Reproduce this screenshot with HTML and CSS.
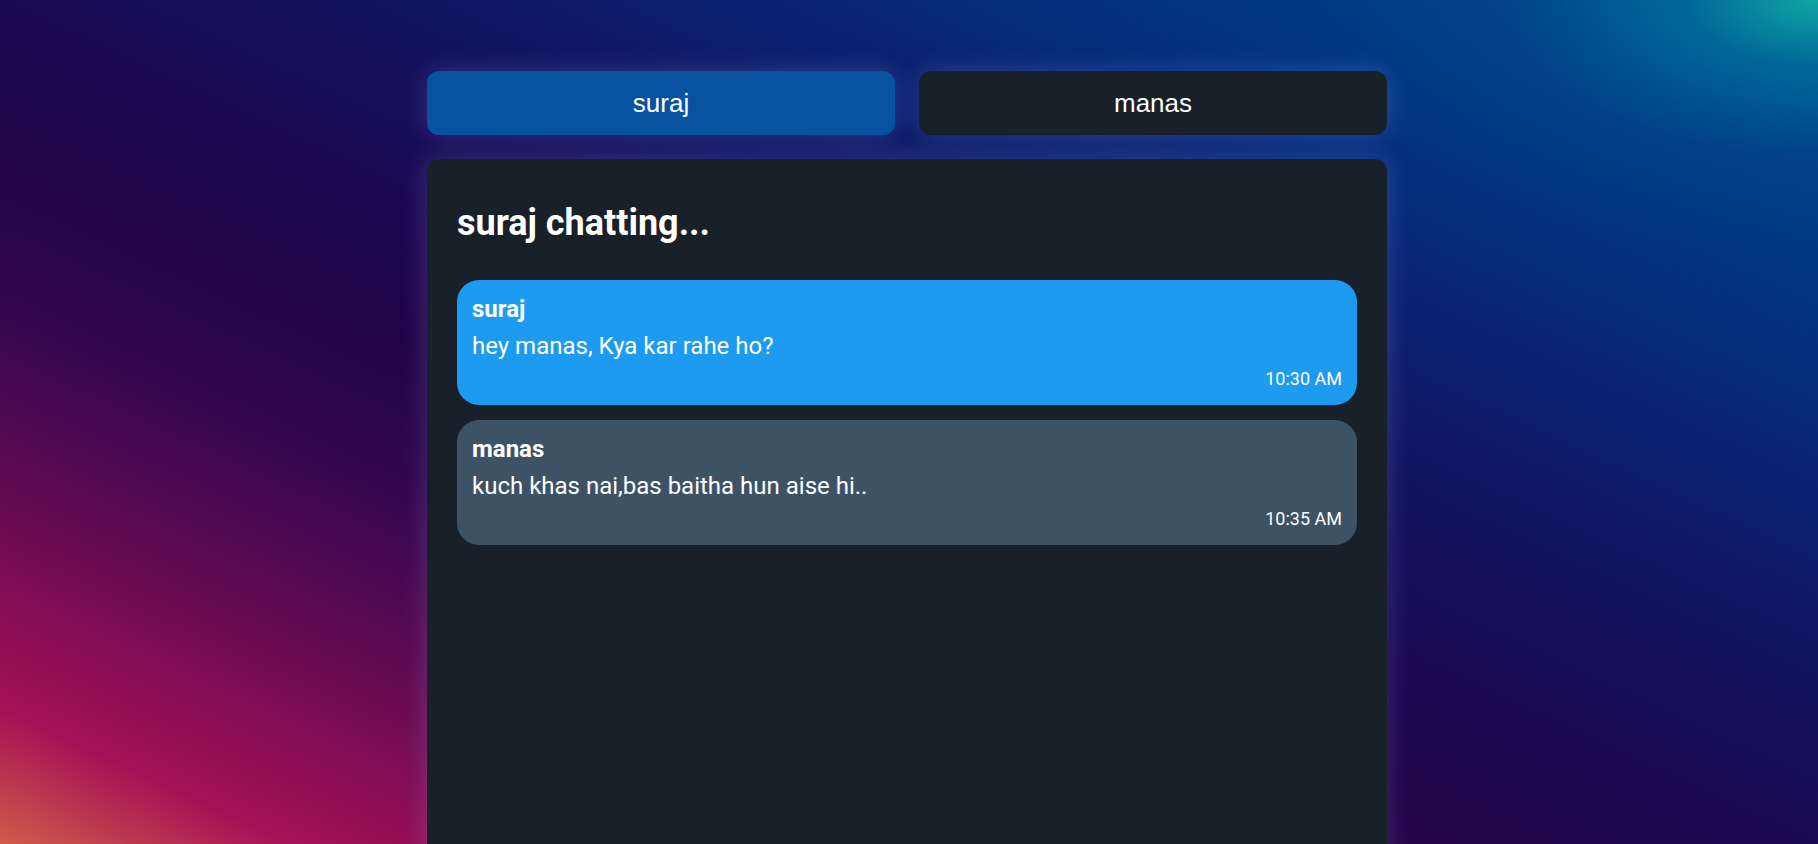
FILE: index.html
```html
<!DOCTYPE html>
<html lang="en">
<head>
<meta charset="utf-8">
<title>Chat</title>
<link rel="stylesheet" href="styles.css">
</head>
<body>
<div class="page">
  <div class="app">
    <div class="tabs">
      <button class="tab tab-active">suraj</button>
      <button class="tab">manas</button>
    </div>
    <section class="chat">
      <h2 class="chat-title">suraj chatting...</h2>
      <div class="messages">
        <div class="bubble bubble-me">
          <div class="bubble-name">suraj</div>
          <div class="bubble-text">hey manas, Kya kar rahe ho?</div>
          <div class="bubble-time">10:30 AM</div>
        </div>
        <div class="bubble bubble-other">
          <div class="bubble-name">manas</div>
          <div class="bubble-text">kuch khas nai,bas baitha hun aise hi..</div>
          <div class="bubble-time">10:35 AM</div>
        </div>
      </div>
    </section>
  </div>
</div>
</body>
</html>
```

FILE: styles.css
```css
html, body {
  margin: 0;
  height: 100%;
  overflow: hidden;
}

body {
  font-family: Roboto, "Liberation Sans", Arial, sans-serif;
  color: #ffffff;
  background:
    radial-gradient(ellipse 520px 260px at 100% 0%, rgba(16,165,165,1) 0%, rgba(0,112,155,0.8) 25%, rgba(0,70,140,0.45) 60%, rgba(0,50,130,0) 100%),
    linear-gradient(to top right, #d05c48 0%, #a51256 8%, #8c0e56 13%, #5c0a52 22%, #320650 33%, #22044a 41%, #1a0a52 50%, #121460 60%, #0a216f 70%, #023483 82%, #013f88 92%, #04548f 100%);
}

.page {
  display: flex;
  justify-content: center;
  padding-right: 4px;
  padding-top: 71px;
}

.app {
  width: 960px;
  display: flex;
  flex-direction: column;
  gap: 24px;
}

.tabs {
  display: flex;
  gap: 24px;
}

.tab {
  flex: 1;
  height: 64px;
  border: none;
  border-radius: 12px;
  background: #18202a;
  color: #ffffff;
  font-family: "Liberation Sans", Arial, sans-serif;
  font-size: 26px;
  padding: 0;
  box-shadow: 0 0 24px rgba(170, 170, 255, 0.22);
}

.tab-active {
  background: #0853a0;
}

.chat {
  background: #18202a;
  border-radius: 12px;
  min-height: 720px;
  padding: 43px 30px 30px;
  box-shadow: 0 0 26px rgba(170, 170, 255, 0.24);
}

.chat-title {
  margin: 0 0 36px;
  font-size: 36px;
  font-weight: 700;
}

.messages {
  display: flex;
  flex-direction: column;
  gap: 15px;
}

.bubble {
  border-radius: 22px;
  padding: 15px 15px 16px;
}

.bubble-me {
  background: #1d9bf0;
}

.bubble-other {
  background: #3e5266;
}

.bubble-name {
  font-size: 24px;
  font-weight: 700;
  margin-bottom: 9px;
}

.bubble-text {
  font-size: 24px;
  margin-bottom: 8px;
}

.bubble-time {
  font-size: 18px;
  text-align: right;
}
```
